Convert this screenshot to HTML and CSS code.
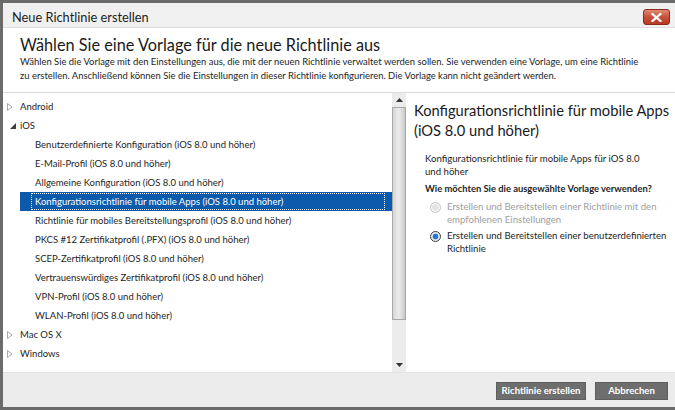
FILE: index.html
```html
<!DOCTYPE html>
<html lang="de">
<head>
<meta charset="utf-8">
<title>Neue Richtlinie erstellen</title>
<link rel="stylesheet" href="styles.css">
</head>
<body>
<div class="window">
  <div class="titlebar">
    <span class="title">Neue Richtlinie erstellen</span>
    <span class="close" aria-label="Schließen">
      <svg width="11" height="9" viewBox="0 0 11 9"><path d="M1.5 1 L9.5 8 M9.5 1 L1.5 8" stroke="#fff" stroke-width="2.2" stroke-linecap="square"/></svg>
    </span>
  </div>
  <div class="header">
    <h1 class="heading">Wählen Sie eine Vorlage für die neue Richtlinie aus</h1>
    <p class="intro">Wählen Sie die Vorlage mit den Einstellungen aus, die mit der neuen Richtlinie verwaltet werden sollen. Sie verwenden eine Vorlage, um eine Richtlinie<br>zu erstellen. Anschließend können Sie die Einstellungen in dieser Richtlinie konfigurieren. Die Vorlage kann nicht geändert werden.</p>
  </div>
  <div class="main">
    <div class="tree">
      <div class="node"><span class="toggle"><svg width="6" height="8" viewBox="0 0 6 8"><path d="M0.5 0.5 L5 4 L0.5 7.5 Z" fill="none" stroke="#a8a8a8"/></svg></span>Android</div>
      <div class="node"><span class="toggle open"><svg width="6" height="6" viewBox="0 0 6 6"><path d="M6 0 L6 6 L0 6 Z" fill="#3c3c3c"/></svg></span>iOS</div>
      <div class="leaf"><span class="label">Benutzerdefinierte Konfiguration (iOS 8.0 und höher)</span></div>
      <div class="leaf"><span class="label">E-Mail-Profil (iOS 8.0 und höher)</span></div>
      <div class="leaf"><span class="label">Allgemeine Konfiguration (iOS 8.0 und höher)</span></div>
      <div class="leaf selected"><span class="label">Konfigurationsrichtlinie für mobile Apps (iOS 8.0 und höher)</span></div>
      <div class="leaf"><span class="label">Richtlinie für mobiles Bereitstellungsprofil (iOS 8.0 und höher)</span></div>
      <div class="leaf"><span class="label">PKCS #12 Zertifikatprofil (.PFX) (iOS 8.0 und höher)</span></div>
      <div class="leaf"><span class="label">SCEP-Zertifikatprofil (iOS 8.0 und höher)</span></div>
      <div class="leaf"><span class="label">Vertrauenswürdiges Zertifikatprofil (iOS 8.0 und höher)</span></div>
      <div class="leaf"><span class="label">VPN-Profil (iOS 8.0 und höher)</span></div>
      <div class="leaf"><span class="label">WLAN-Profil (iOS 8.0 und höher)</span></div>
      <div class="node"><span class="toggle"><svg width="6" height="8" viewBox="0 0 6 8"><path d="M0.5 0.5 L5 4 L0.5 7.5 Z" fill="none" stroke="#a8a8a8"/></svg></span>Mac OS X</div>
      <div class="node"><span class="toggle"><svg width="6" height="8" viewBox="0 0 6 8"><path d="M0.5 0.5 L5 4 L0.5 7.5 Z" fill="none" stroke="#a8a8a8"/></svg></span>Windows</div>
    </div>
    <div class="scrollbar">
      <div class="arrow"><svg width="7" height="4" viewBox="0 0 7 4"><path d="M0 4 L3.5 0 L7 4 Z" fill="#333"/></svg></div>
      <div class="thumb"></div>
      <div class="track"></div>
      <div class="arrow"><svg width="7" height="4" viewBox="0 0 7 4"><path d="M0 0 L3.5 4 L7 0 Z" fill="#333"/></svg></div>
    </div>
    <div class="details">
      <h2 class="details-title">Konfigurationsrichtlinie für mobile Apps<br>(iOS 8.0 und höher)</h2>
      <p class="details-text">Konfigurationsrichtlinie für mobile Apps für iOS 8.0<br>und höher</p>
      <p class="question">Wie möchten Sie die ausgewählte Vorlage verwenden?</p>
      <div class="option disabled"><span class="radio"></span><span class="option-text">Erstellen und Bereitstellen einer Richtlinie mit den<br>empfohlenen Einstellungen</span></div>
      <div class="option"><span class="radio checked"></span><span class="option-text">Erstellen und Bereitstellen einer benutzerdefinierten<br>Richtlinie</span></div>
    </div>
  </div>
  <div class="footer">
    <span class="button wide">Richtlinie erstellen</span>
    <span class="button">Abbrechen</span>
  </div>
</div>
</body>
</html>
```

FILE: styles.css
```css
* { box-sizing: border-box; }

html, body {
  margin: 0;
  padding: 0;
  background: #6b6b6b;
}

body {
  font-family: Lato, "Open Sans", sans-serif;
  color: #1b1b1b;
  width: 675px;
  height: 410px;
  overflow: hidden;
}

.window {
  width: 675px;
  height: 410px;
  border-top: 3px solid #6b6b6b;
  border-left: 3px solid #6b6b6b;
  border-bottom: 3px solid #6b6b6b;
  display: flex;
  flex-direction: column;
  background: #fff;
}

/* Title bar */
.titlebar {
  height: 25px;
  flex: none;
  background: #f0f0f0;
  border-bottom: 1px solid #dedede;
  display: flex;
  align-items: flex-start;
  justify-content: space-between;
  padding: 0 5px 0 9px;
}

.title {
  font-size: 12.8px;
  line-height: 22px;
  margin-top: 3px;
  color: #222;
}

.close {
  margin-top: 6px;
  width: 27px;
  height: 16px;
  border: 1px solid #8a2b1d;
  border-radius: 3px;
  background: linear-gradient(#e08a74, #c9503a 50%, #b83a25);
  display: flex;
  align-items: center;
  justify-content: center;
}

/* Header */
.header {
  height: 65px;
  flex: none;
  border-bottom: 1px solid #dcdcdc;
  padding: 7px 0 0 17px;
}

.heading {
  margin: 0;
  font-size: 16.3px;
  font-weight: 400;
  line-height: 20px;
  color: #1a1a1a;
}

.intro {
  margin: 0;
  font-size: 9.45px;
  line-height: 14px;
  white-space: nowrap;
  color: #1e1e1e;
}

/* Main area */
.main {
  height: 279px;
  flex: none;
  display: flex;
}

.tree {
  width: 389px;
  flex: none;
  padding-top: 4px;
  font-size: 9.5px;
}

.node {
  height: 19px;
  line-height: 19px;
  display: flex;
  align-items: center;
  color: #1e1e1e;
}

.toggle {
  width: 17px;
  flex: none;
  display: flex;
  align-items: center;
  padding-left: 4px;
}

.toggle.open {
  padding-left: 7px;
}

.leaf {
  height: 19px;
  margin-left: 17px;
  padding: 1px 7px 1px 11px;
  display: flex;
}

.label {
  flex: 1;
  line-height: 15px;
  padding-left: 3px;
  border: 1px dotted transparent;
  white-space: nowrap;
  color: #1e1e1e;
}

.leaf.selected {
  background: #0b5aab;
}

.leaf.selected .label {
  color: #fff;
  border-color: #fff;
}

/* Scrollbar */
.scrollbar {
  width: 14px;
  flex: none;
  background: #ececec;
  display: flex;
  flex-direction: column;
}

.arrow {
  height: 14px;
  flex: none;
  display: flex;
  align-items: center;
  justify-content: center;
}

.thumb {
  height: 213px;
  flex: none;
  border: 1px solid #a9a9a9;
  background: linear-gradient(to right, #d4d4d4, #ececec 45%, #d8d8d8 80%, #c6c6c6);
}

.track {
  flex: 1;
}

/* Details panel */
.details {
  flex: 1;
  padding: 7px 0 0 8px;
  background: #fff;
  white-space: nowrap;
}

.details-title {
  margin: 0;
  font-size: 14.7px;
  font-weight: 400;
  line-height: 20px;
  color: #1a1a1a;
}

.details-text {
  margin: 12px 0 0 11px;
  font-size: 9.6px;
  line-height: 13px;
  color: #1e1e1e;
}

.question {
  margin: 4px 0 0 11px;
  font-size: 9.4px;
  line-height: 13px;
  font-weight: 700;
  color: #1e1e1e;
}

.option {
  margin: 5px 0 0 16px;
  display: flex;
  align-items: flex-start;
  font-size: 9.6px;
  line-height: 13px;
  color: #1e1e1e;
}

.option + .option {
  margin-top: 3px;
}

.option.disabled {
  color: #a0a0a0;
}

.radio {
  width: 11px;
  height: 11px;
  flex: none;
  margin: 2px 6px 0 0;
  border-radius: 50%;
  border: 1px solid #3b3b3b;
  background: radial-gradient(circle, #1d7ad8 0 2.6px, #e9e9e9 3.2px, #f7f7f7);
}

.disabled .radio {
  border-color: #c4c4c4;
  background: radial-gradient(circle, #e4e4e4 0 3px, #f6f6f6 3.5px);
}

/* Footer */
.footer {
  flex: 1;
  background: #ececec;
  border-top: 1px solid #e2e2e2;
  display: flex;
  justify-content: flex-end;
  align-items: flex-start;
  gap: 9px;
  padding: 9px 7px 0 0;
}

.button {
  width: 73px;
  height: 18px;
  background: #6e6e6e;
  border: 1px solid #5e5e5e;
  color: #fff;
  font-size: 9.6px;
  font-weight: 700;
  line-height: 16px;
  text-align: center;
}

.button.wide {
  width: 90px;
}
```
